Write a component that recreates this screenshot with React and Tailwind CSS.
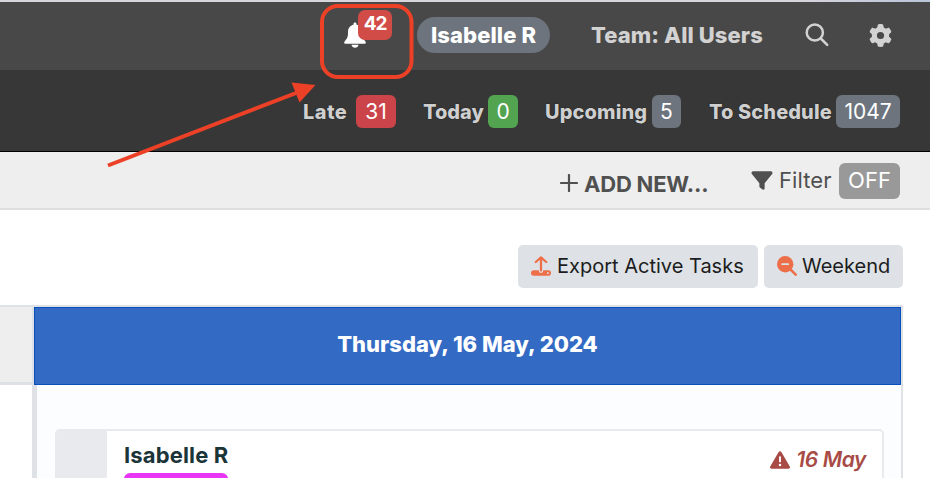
import React from "react";
import { FaFilter, FaGear, FaTriangleExclamation } from "react-icons/fa6";

function BellIcon({ className }) {
  return (
    <svg viewBox="0 0 22 26" className={className} fill="currentColor">
      <path d="M11 .4c-.9 0-1.500.7-1.500 1.500v.8C6.200 3.400 4 6.200 4 9.600v2.200c0 2.400-.8 4.600-2.300 6.300L.6 19.400c-.9 1-.3 2.300 1 2.300h18.800c1.300 0 1.900-1.300 1-2.300l-1.100-1.300C18.800 16.400 18 14.200 18 11.800V9.600c0-3.400-2.200-6.200-5.500-6.900v-.8C12.500 1.100 11.900.4 11 .4z" />
      <path d="M7.500 22.700h7c-.3 1.800-1.700 3-3.500 3s-3.200-1.200-3.500-3z" />
    </svg>
  );
}

function SearchIcon({ className }) {
  return (
    <svg viewBox="0 0 24 24" className={className} fill="none" stroke="currentColor" strokeWidth="2.500" strokeLinecap="round">
      <circle cx="9.800" cy="9.500" r="8.100" />
      <path d="M15.800 15.500l6.400 6.400" />
    </svg>
  );
}

function UploadIcon({ className }) {
  return (
    <svg viewBox="0 0 20 20" className={className} fill="none" stroke="currentColor" strokeLinecap="round" strokeLinejoin="round">
      <path d="M4.800 6L10 1.400 15.200 6M10 2V14.500" strokeWidth="2.300" />
      <path
        d="M2.800 14.200H7.700v.4a2.300 2.300 0 0 0 4.600 0v-.4h4.900a2.800 2.800 0 0 1 0 5.600H2.800a2.800 2.800 0 0 1 0-5.600zM16.900 16.100a.9.9 0 1 0 0 1.800.9.9 0 0 0 0-1.800z"
        fill="currentColor"
        fillRule="evenodd"
        stroke="none"
      />
    </svg>
  );
}

function ZoomOutIcon({ className }) {
  return (
    <svg viewBox="0 0 20 20" className={className} fill="none" strokeLinecap="round">
      <circle cx="8.200" cy="8.200" r="8.200" fill="currentColor" />
      <path d="M13 13l5.700 5.700" stroke="currentColor" strokeWidth="2.500" />
      <path d="M5.200 8.200h6" stroke="#dee2e6" strokeWidth="1.800" />
    </svg>
  );
}

function Count({ className, children }) {
  return (
    <span className={`flex h-[33px] shrink-0 items-center justify-center rounded-md text-[21px] text-white [text-shadow:none] ${className}`}>
      {children}
    </span>
  );
}

export default function App() {
  return (
    <div className="relative h-[478px] w-[930px] overflow-hidden whitespace-nowrap bg-white font-['Inter',sans-serif]">
      <div className="h-[2px] bg-linear-to-r from-[#d8d5dc] from-85% to-[#b9c5da]" />
      <header className="flex h-[68px] items-center bg-[#484848] pb-[2px] pl-[344px] text-[#d2d2d2]">
        <div className="relative w-[22px] shrink-0">
          <BellIcon className="h-[26px] w-[22px] text-white" />
          <span className="absolute -top-[12px] left-[14px] flex h-[30px] w-[34px] items-center justify-center rounded-[7px] bg-[#d14b47] pb-[1px] text-[19px] font-bold tracking-[-1.1px] text-white">
            42
          </span>
        </div>
        <span className="ml-[51px] flex h-[36px] w-[133px] shrink-0 items-center justify-center rounded-full bg-[#6d747d] text-[22px] font-extrabold tracking-[0.1px] text-white">
          Isabelle R
        </span>
        <span className="ml-[41px] w-[214px] shrink-0 text-[22px] font-extrabold tracking-[0.1px]">Team: All Users</span>
        <SearchIcon className="size-[24px] shrink-0" />
        <FaGear className="ml-[40px] size-[23px] shrink-0" />
      </header>

      <nav className="flex h-[82px] items-center border-b border-black bg-[#373737] pl-[303px] pt-[2px] text-[20px] font-extrabold text-[#cfcfcf] [text-shadow:0_0_1px_#000]">
        <span className="w-[53px] shrink-0 tracking-[0.4px]">Late</span>
        <Count className="w-[40px] bg-[#cb444a] font-normal">31</Count>
        <span className="ml-[27px] w-[65px] shrink-0">Today</span>
        <Count className="w-[30px] bg-[#53a451] font-normal">0</Count>
        <span className="ml-[27px] w-[107px] shrink-0 tracking-[0.1px]">Upcoming</span>
        <Count className="w-[29px] bg-[#6d747d] font-normal">5</Count>
        <span className="ml-[28px] w-[127px] shrink-0 tracking-[0.1px]">To Schedule</span>
        <Count className="w-[64px] bg-[#6d747d] font-normal">1047</Count>
      </nav>

      <div className="flex h-[58px] items-center border-b-2 border-[#dedede] bg-[#eeeeee] pl-[560px] pt-[1px] text-[#505050]">
        <svg viewBox="0 0 18 18" className="mt-[5px] size-[18px] shrink-0" fill="none" stroke="currentColor" strokeWidth="2.200" strokeLinecap="round">
          <path d="M9 1v16M1 9h16" />
        </svg>
        <span className="ml-[6px] mt-[7px] w-[167px] shrink-0 text-[22px] font-bold tracking-[-0.2px]">ADD NEW...</span>
        <FaFilter className="h-[21px] w-[22px] shrink-0" />
        <span className="ml-[6px] w-[60px] shrink-0 text-[22px] tracking-[0.1px]">Filter</span>
        <span className="flex h-[36px] w-[61px] shrink-0 items-center justify-center rounded-md bg-[#999999] text-[22px] text-white">OFF</span>
      </div>

      <div className="flex h-[95px] items-start justify-end gap-[6px] pr-[27px] pt-[35px] text-[20px] text-[#1b1d20]">
        <button className="flex h-[43px] w-[240px] items-center rounded-[5px] bg-[#dee2e6] pb-[2px] pl-[13px]">
          <UploadIcon className="mr-[6px] size-[20px] shrink-0 text-[#ed6f49]" />
          Export Active Tasks
        </button>
        <button className="flex h-[43px] w-[139px] items-center rounded-[5px] bg-[#dee2e6] pb-[2px] pl-[13px]">
          <ZoomOutIcon className="mr-[5px] size-[20px] shrink-0 text-[#ed6f49]" />
          Weekend
        </button>
      </div>

      <div className="flex h-[174px] w-[903px] border-t-2 border-[#dee2e6]">
        <div className="w-[32px] shrink-0">
          <div className="h-[78px] border-b-[3px] border-[#dee2e6] bg-[#eeeeee]" />
        </div>
        <div className="flex-1">
          <div className="flex h-[78px] border-l-2 border-r-2 border-[#dee2e6]">
            <div className="flex flex-1 items-center justify-center border border-[#0a50bd] bg-[#336ac4] pb-[3px] text-[22px] font-extrabold text-white">
              Thursday, 16 May, 2024
            </div>
          </div>
          <div className="h-[94px] border-l-[5px] border-r-2 border-[#dee2e6] bg-[#fcfdfe] pl-[18px] pr-[17px] pt-[44px]">
            <div className="flex h-[80px] overflow-hidden rounded-[5px] border-2 border-[#e8eaee] bg-white">
              <div className="w-[50px] shrink-0 bg-[#e9eaee]" />
              <div className="flex flex-1 justify-between pl-[17px] pr-[16px]">
                <div className="pt-[8px]">
                  <div className="text-[22px] leading-[32px] font-bold tracking-[0.15px] text-[#1b3438]">Isabelle R</div>
                  <div className="mt-[2px] h-[24px] w-[104px] rounded-[6px] bg-[#e935f5]" />
                </div>
                <div className="flex h-[57px] items-center text-[21px] font-semibold tracking-[-0.4px] text-[#a84a45] italic">
                  <FaTriangleExclamation className="mr-[6px] size-[20px]" />
                  16 May
                </div>
              </div>
            </div>
          </div>
        </div>
      </div>

      <svg viewBox="0 0 930 478" className="pointer-events-none absolute inset-0 h-[478px] w-[930px]">
        <rect x="322" y="6" width="89.500" height="71" rx="16" fill="none" stroke="#ec4126" strokeWidth="4" />
        <path d="M108 165.500L300 91.500" stroke="#ec4126" strokeWidth="4" />
        <path d="M291.500 82.500L315.500 85L299.500 102.500z" fill="#ec4126" />
      </svg>
    </div>
  );
}
